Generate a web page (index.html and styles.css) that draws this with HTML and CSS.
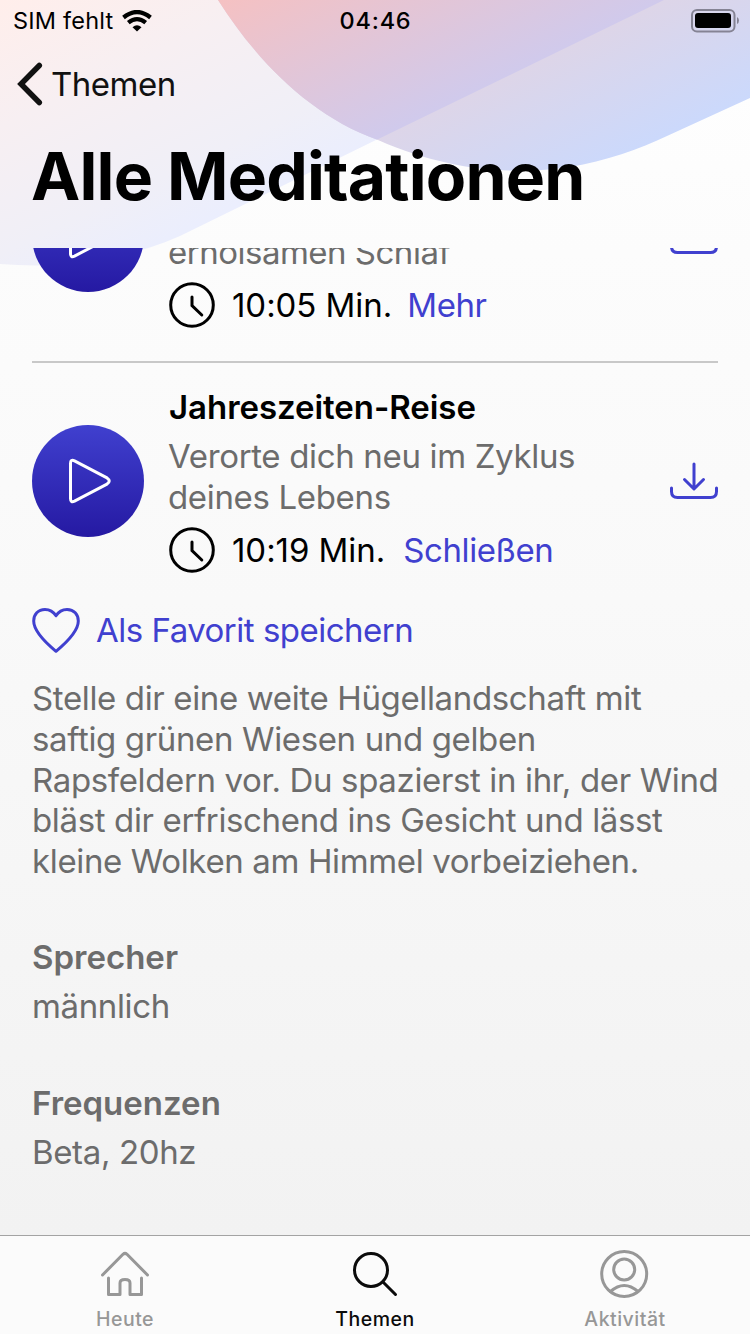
FILE: index.html
```html
<!DOCTYPE html>
<html lang="de">
<head>
<meta charset="utf-8">
<title>Alle Meditationen</title>
<link rel="stylesheet" href="styles.css">
</head>
<body>
<svg class="defs" width="0" height="0">
  <defs>
    <linearGradient id="disc" x1="0" y1="0" x2="0" y2="1"><stop offset="0" stop-color="#4040cf"/><stop offset="1" stop-color="#2519a2"/></linearGradient>
    <symbol id="play" viewBox="0 0 112 112"><circle cx="56" cy="56" r="56" fill="url(#disc)"/><path d="M38.5 38.5v35q0 4.500 4 2.600l32.500-17q4.500-3.100 0-6.200L42.500 35.900q-4-1.900-4 2.600z" fill="none" stroke="#fff" stroke-width="3" stroke-linejoin="round"/></symbol>
    <symbol id="clock" viewBox="0 0 46 46"><circle cx="23" cy="23" r="21.300"/><path d="M23 15v8.500l9.800 9.500"/></symbol>
    <symbol id="download" viewBox="0 0 48 38"><path d="M24 2v24.500M14.500 17.500l9.500 9.500 9.500-9.500M1.500 26v3.500q0 6 6 6h33q6 0 6-6V26"/></symbol>
  </defs>
</svg>
<div class="screen">
  <svg class="backdrop" viewBox="0 0 750 280">
    <defs>
      <linearGradient id="pale" gradientUnits="userSpaceOnUse" x1="0" y1="0" x2="124" y2="259"><stop offset="0" stop-color="#ffeeeb"/><stop offset=".4" stop-color="#f7eff2"/><stop offset=".8" stop-color="#f0eff7"/><stop offset="1" stop-color="#ebeefd"/></linearGradient>
      <linearGradient id="wave" gradientUnits="userSpaceOnUse" x1="124" y1="259" x2="178" y2="372"><stop offset="0" stop-color="#ddd5e8"/><stop offset="1" stop-color="#cbd9fc"/></linearGradient>
      <linearGradient id="cross" gradientUnits="userSpaceOnUse" x1="41" y1="85" x2="124" y2="259"><stop offset="0" stop-color="#f5c1c2"/><stop offset="1" stop-color="#d0caec"/></linearGradient>
      <clipPath id="round"><path d="M218 0C256 60 310 116 378 140C455 174 520 174 570 167C605 161 640 149 667 136L750 98V0z"/></clipPath>
    </defs>
    <path d="M0 264C60 269 120 262 180 236L378 139L664 0H0z" fill="url(#pale)"/>
    <g clip-path="url(#round)"><path d="M200 0h550v180H200z" fill="url(#wave)"/><path d="M664 0L330 162.500L200 162V0z" fill="url(#cross)"/></g>
  </svg>
  <header class="header">
    <div class="status">
      <div class="carrier"><span class="carrier-name">SIM fehlt</span>
        <svg width="30" height="22" viewBox="0 0 30 22" fill="none" stroke="#000"><path d="M1.500 7.500Q15-3.500 28.500 7.500" stroke-width="4.200"/><path d="M6.300 12.700Q15 5.500 23.700 12.700" stroke-width="4.200"/><path d="M10.500 17.200Q15 13.500 19.500 17.200L15 21.500z" fill="#000" stroke="none"/></svg>
      </div>
      <span class="time">04:46</span>
      <svg class="battery" width="49" height="24" viewBox="0 0 49 24"><rect x="1" y="1" width="42.500" height="21.500" rx="5" fill="none" stroke="#858394" stroke-width="2"/><rect x="4" y="4" width="36" height="15" rx="3"/><path d="M46 8q2 1 2 3.500T46 15z" fill="#858394"/></svg>
    </div>
    <nav class="back">
      <svg width="26" height="44" viewBox="0 0 26 44" fill="none" stroke="#111" stroke-width="5.500" stroke-linecap="round" stroke-linejoin="miter"><path d="M22.300 3.500L4 22L22.300 40.500"/></svg>
      <span class="back-label">Themen</span>
    </nav>
    <h1 class="title">Alle Meditationen</h1>
  </header>
  <main class="scroll">
    <article class="item first">
      <svg class="play"><use href="#play"/></svg>
      <div class="info">
        <p class="desc desc-tail">erholsamen Schlaf</p>
        <div class="meta"><svg class="clock"><use href="#clock"/></svg><span class="min">10:05 Min.</span><a class="link">Mehr</a></div>
      </div>
      <svg class="download"><use href="#download"/></svg>
    </article>
    <article class="item">
      <svg class="play"><use href="#play"/></svg>
      <div class="info">
        <h2 class="name">Jahreszeiten-Reise</h2>
        <p class="desc">Verorte dich neu im Zyklus<br>deines Lebens</p>
        <div class="meta"><svg class="clock"><use href="#clock"/></svg><span class="min">10:19 Min.</span><a class="link">Schließen</a></div>
      </div>
      <svg class="download"><use href="#download"/></svg>
    </article>
    <div class="favorite">
      <svg width="48" height="48" viewBox="0 0 48 48" fill="none" stroke="#4040cf" stroke-width="3" stroke-linejoin="round"><path d="M24 9.800C21 5 17 3.500 13 3.500C6 3.500 1.700 8.500 1.700 15C1.700 24 11 34.500 24 45.300C37 34.500 46.300 24 46.300 15C46.300 8.500 42 3.500 35 3.500C31 3.500 27 5 24 9.800z"/></svg>
      <a class="fav-label">Als Favorit speichern</a>
    </div>
    <p class="text">Stelle dir eine weite Hügellandschaft mit<br>saftig grünen Wiesen und gelben<br>Rapsfeldern vor. Du spazierst in ihr, der Wind<br>bläst dir erfrischend ins Gesicht und lässt<br>kleine Wolken am Himmel vorbeiziehen.</p>
    <section class="fact"><h3 class="fact-title">Sprecher</h3><p class="fact-value">männlich</p></section>
    <section class="fact frequencies"><h3 class="fact-title">Frequenzen</h3><p class="fact-value">Beta, 20hz</p></section>
    <section class="fact"><h3 class="fact-title">Effekte</h3></section>
  </main>
  <footer class="tabs">
    <div class="tab"><svg class="tab-icon" viewBox="0 0 50 50"><path d="M2.500 25L23 4.300q2-1.800 4 0L47.500 25M8.500 28v16.500h11.500V33q0-3.500 5-3.500t5 3.500v11.500H41.500V28"/></svg><span class="tab-label">Heute</span></div>
    <div class="tab active"><svg class="tab-icon" viewBox="0 0 50 50"><circle cx="21" cy="20" r="16.500"/><path d="M33 32L45.500 44.500"/></svg><span class="tab-label">Themen</span></div>
    <div class="tab"><svg class="tab-icon" viewBox="0 0 50 50"><circle cx="24.200" cy="24" r="22.500"/><circle cx="24.200" cy="19.500" r="10.500"/><path d="M10.500 41.500Q24.200 29.500 38 41.500"/></svg><span class="tab-label">Aktivität</span></div>
  </footer>
</div>
</body>
</html>
```

FILE: styles.css
```css
* { box-sizing: border-box; margin: 0; padding: 0; }
body { width: 750px; height: 1334px; overflow: hidden; font-family: Inter, "Noto Sans", sans-serif; font-size: 33px; line-height: 41px; color: #000; }
svg { display: block; flex: none; }
.defs { position: absolute; }
.screen { position: relative; width: 750px; height: 1334px; display: flex; flex-direction: column; background: linear-gradient(#fff, #fcfcfc 250px, #f9f9f9 600px, #f2f2f2 1235px); }
.backdrop { position: absolute; top: 0; left: 0; width: 750px; height: 280px; }
.header { position: relative; height: 248px; flex: none; }
.status { display: grid; grid-template-columns: 1fr auto 1fr; height: 40px; padding: 0 10px 0 13px; align-items: center; font-size: 23.5px; }
.carrier { display: flex; align-items: center; gap: 9px; }
.carrier-name { letter-spacing: .2px; }
.time { font-weight: 500; letter-spacing: .8px; margin-left: -2px; }
.battery { justify-self: end; }
.back { display: flex; align-items: center; gap: 8px; height: 88px; padding-left: 17px; color: #111; }
.back-label { letter-spacing: -.5px; }
.title { padding-left: 31px; font-size: 66px; line-height: 80px; margin-top: 8px; font-weight: 700; letter-spacing: -.8px; white-space: nowrap; }
.scroll { position: relative; flex: 1; min-height: 0; overflow: hidden; padding: 0 32px; white-space: nowrap; }
.item { display: flex; align-items: center; padding: 24px 0 32px; }
.item.first { align-items: flex-end; margin-top: -92px; border-bottom: 2px solid #c8c8c8; }
.first .play { margin-bottom: 37px; }
.first .download { margin-bottom: 74px; }
.play { width: 112px; height: 112px; margin-right: 25px; }
.info { flex: 1; }
.name { font-size: 33px; line-height: 41px; font-weight: 600; margin-bottom: 8px; letter-spacing: -.05px; }
.desc { color: #6c6c6c; line-height: 41px; margin: 0 0 8px -1px; letter-spacing: -.34px; }
.desc-tail { letter-spacing: -.5px; }
.meta { display: flex; align-items: center; height: 48px; }
.clock { width: 46px; height: 46px; fill: none; stroke: #000; stroke-width: 3; stroke-linecap: round; margin-right: 17px; }
.min { margin-right: 18px; letter-spacing: -.05px; }
.first .min { margin-right: 15px; }
.link { color: #4040cf; letter-spacing: -.4px; }
.download { width: 48px; height: 38px; fill: none; stroke: #4040cf; stroke-width: 3; stroke-linecap: round; stroke-linejoin: round; }
.favorite { display: flex; align-items: center; gap: 16px; height: 48px; margin-bottom: 24px; }
.fav-label { color: #4040cf; letter-spacing: -.5px; }
.text { color: #6c6c6c; line-height: 40.8px; margin-bottom: 55px; letter-spacing: -.36px; }
.fact { color: #6c6c6c; margin-bottom: 56px; }
.frequencies { margin-bottom: 55px; }
.fact-title { font-size: 33px; font-weight: 600; line-height: 41px; margin-bottom: 8px; }
.fact-value { letter-spacing: -.36px; }
.tabs { position: relative; height: 99px; flex: none; display: flex; background: #fbfbfb; border-top: 1px solid #a3a3a3; }
.tab { flex: 1; display: flex; flex-direction: column; align-items: center; padding-top: 14px; color: #979797; }
.tab.active { color: #0b0b0b; }
.tab-icon { width: 50px; height: 50px; fill: none; stroke: currentColor; stroke-width: 3; stroke-linecap: round; stroke-linejoin: round; }
.tab-label { font-size: 19.5px; line-height: 24px; margin-top: 7px; font-weight: 500; letter-spacing: .5px; }
```
